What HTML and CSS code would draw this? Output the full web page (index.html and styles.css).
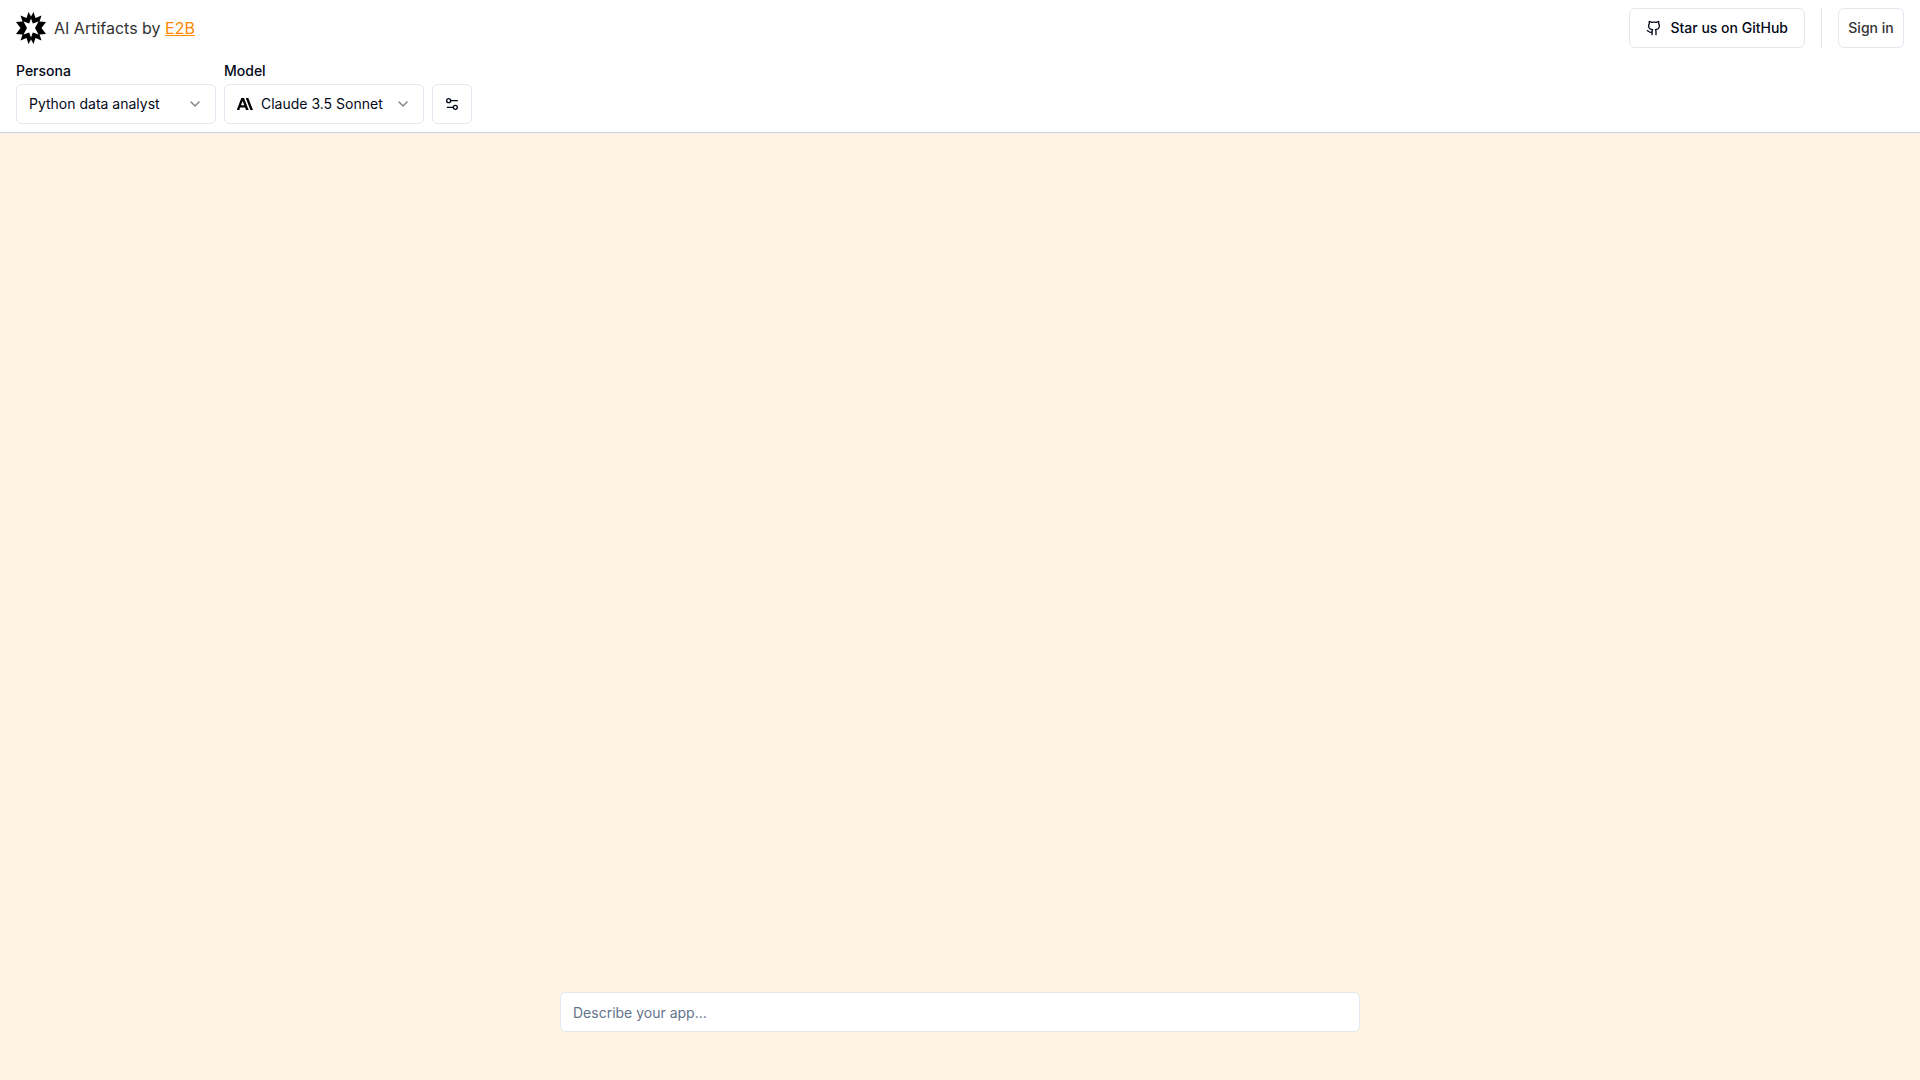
FILE: index.html
```html
<!DOCTYPE html>
<html lang="en">
<head>
<meta charset="utf-8">
<meta name="viewport" content="width=device-width, initial-scale=1">
<title>AI Artifacts by E2B</title>
<link rel="stylesheet" href="styles.css">
</head>
<body>
<header class="header">
  <nav class="topbar">
    <div class="brand">
      <svg class="logo" viewBox="-15 -16 30 32" aria-hidden="true">
        <path fill-rule="evenodd" d="M-2.500-16 0-11.500 2.500-16 4.500-10 10.500-12.500 8.500-6.500 15-6 10.500 0 15 6 8.500 6.500 10.500 12.500 4.500 10 2.500 16 0 11.500-2.500 16-4.500 10-10.500 12.500-8.500 6.500-15 6-10.500 0-15-6-8.500-6.500-10.500-12.500-4.500-10ZM0-9.500-1.800-4.500-7.500-6.500-4 0-7.500 6.500-1.800 4.500 0 9.500 1.800 4.500 7.500 6.500 4 0 7.500-6.500 1.800-4.500Z"/>
      </svg>
      <h1 class="title">AI Artifacts by <a class="brand-link" href="#">E2B</a></h1>
    </div>
    <div class="actions">
      <a class="button github" href="#">
        <svg class="icon" viewBox="0 0 24 24" aria-hidden="true"><path d="M15 22v-4a4.800 4.800 0 0 0-1-3.500c3 0 6-2 6-5.500.08-1.250-.27-2.480-1-3.500.28-1.150.28-2.350 0-3.500 0 0-1 0-3 1.500-2.640-.5-5.360-.5-8 0C6 2 5 2 5 2c-.3 1.150-.3 2.350 0 3.500A5.403 5.403 0 0 0 4 9c0 3.500 3 5.500 6 5.500-.39.49-.68 1.050-.85 1.650-.17.6-.22 1.230-.15 1.850v4"/><path d="M9 18c-4.510 2-5-2-7-2"/></svg>
        Star us on GitHub
      </a>
      <span class="divider"></span>
      <button class="button signin" type="button">Sign in</button>
    </div>
  </nav>
  <form class="controls">
    <div class="field">
      <label class="label" for="persona">Persona</label>
      <div class="picker">
        <select class="select" id="persona"><option>Python data analyst</option></select>
        <svg class="chevron" viewBox="0 0 16 16" aria-hidden="true"><path d="m4 6 4 4 4-4"/></svg>
      </div>
    </div>
    <div class="field">
      <label class="label" for="model">Model</label>
      <div class="picker">
        <svg class="vendor" viewBox="0 0 16 12" aria-hidden="true"><path d="M8.700 0h2.600L16 12h-2.600ZM4.300 0H7l4.700 12H9L8.100 9.500H3.200L2.300 12H-.3ZM7.300 7.300 5.650 3 4 7.300Z"/></svg>
        <select class="select with-logo" id="model"><option>Claude 3.5 Sonnet</option></select>
        <svg class="chevron" viewBox="0 0 16 16" aria-hidden="true"><path d="m4 6 4 4 4-4"/></svg>
      </div>
    </div>
    <button class="button square" type="button" aria-label="Model settings">
      <svg class="icon" viewBox="0 0 24 24" aria-hidden="true"><path d="M20 7h-9M14 17H5"/><circle cx="17" cy="17" r="3"/><circle cx="7" cy="7" r="3"/></svg>
    </button>
  </form>
</header>
<main class="main">
  <form class="prompt">
    <input class="prompt-input" type="text" placeholder="Describe your app..." aria-label="Describe your app">
  </form>
</main>
</body>
</html>
```
FILE: styles.css
```css
* {
  box-sizing: border-box;
}

body {
  margin: 0;
  min-height: 100vh;
  display: flex;
  flex-direction: column;
  background: #fff3e5;
  color: #020817;
  font: 14px/20px Inter, "Liberation Sans", sans-serif;
}

.header {
  background: #fff;
  border-bottom: 1px solid #cbd5e1;
}

.topbar {
  display: flex;
  justify-content: space-between;
  align-items: center;
  padding: 8px 16px;
}

.brand,
.actions {
  display: flex;
  align-items: center;
}

.brand {
  gap: 8px;
}

.logo {
  width: 30px;
  height: 32px;
}

.title {
  margin: 0;
  font-size: 16px;
  line-height: 24px;
  font-weight: 400;
  color: #333;
}

.brand-link {
  color: #ff8800;
  text-decoration: underline;
}

.actions {
  gap: 16px;
}

.button {
  display: flex;
  align-items: center;
  justify-content: center;
  height: 40px;
  border: 1px solid #e2e8f0;
  border-radius: 6px;
  background: #fff;
  color: #020817;
  font: inherit;
  font-weight: 500;
  text-decoration: none;
}

.github {
  gap: 8px;
  padding: 0 16px;
}

.icon {
  width: 16px;
  height: 16px;
  fill: none;
  stroke: currentColor;
  stroke-width: 2;
  stroke-linecap: round;
  stroke-linejoin: round;
}

.divider {
  width: 1px;
  height: 40px;
  background: #e2e8f0;
}

.signin {
  width: 66px;
  padding: 0;
  color: #333;
}

.controls {
  display: flex;
  align-items: flex-end;
  gap: 8px;
  padding: 5px 16px 8px;
}

.field {
  display: flex;
  flex-direction: column;
  gap: 3px;
}

.label {
  font-weight: 500;
}

.picker {
  position: relative;
  width: 200px;
}

.select {
  display: block;
  width: 100%;
  height: 40px;
  padding: 0 36px 0 12px;
  appearance: none;
  border: 1px solid #e2e8f0;
  border-radius: 6px;
  background: #fff;
  color: #020817;
  font: inherit;
}

.with-logo {
  padding-left: 36px;
}

.chevron {
  position: absolute;
  top: 12px;
  right: 13px;
  width: 16px;
  height: 16px;
  fill: none;
  stroke: #80848c;
  stroke-width: 1.500;
  stroke-linecap: round;
  stroke-linejoin: round;
  pointer-events: none;
}

.vendor {
  position: absolute;
  top: 14px;
  left: 13px;
  width: 16px;
  height: 12px;
  pointer-events: none;
}

.square {
  width: 40px;
  padding: 0;
}

.main {
  flex: 1;
  display: flex;
  flex-direction: column;
  justify-content: flex-end;
  align-items: center;
  padding: 0 16px 48px;
}

.prompt {
  width: 100%;
  max-width: 800px;
}

.prompt-input {
  display: block;
  width: 100%;
  height: 40px;
  padding: 0 12px;
  border: 1px solid #e2e8f0;
  border-radius: 6px;
  background: #fff;
  color: #020817;
  font: inherit;
}

.prompt-input::placeholder {
  color: #64748b;
  opacity: 1;
}
```
